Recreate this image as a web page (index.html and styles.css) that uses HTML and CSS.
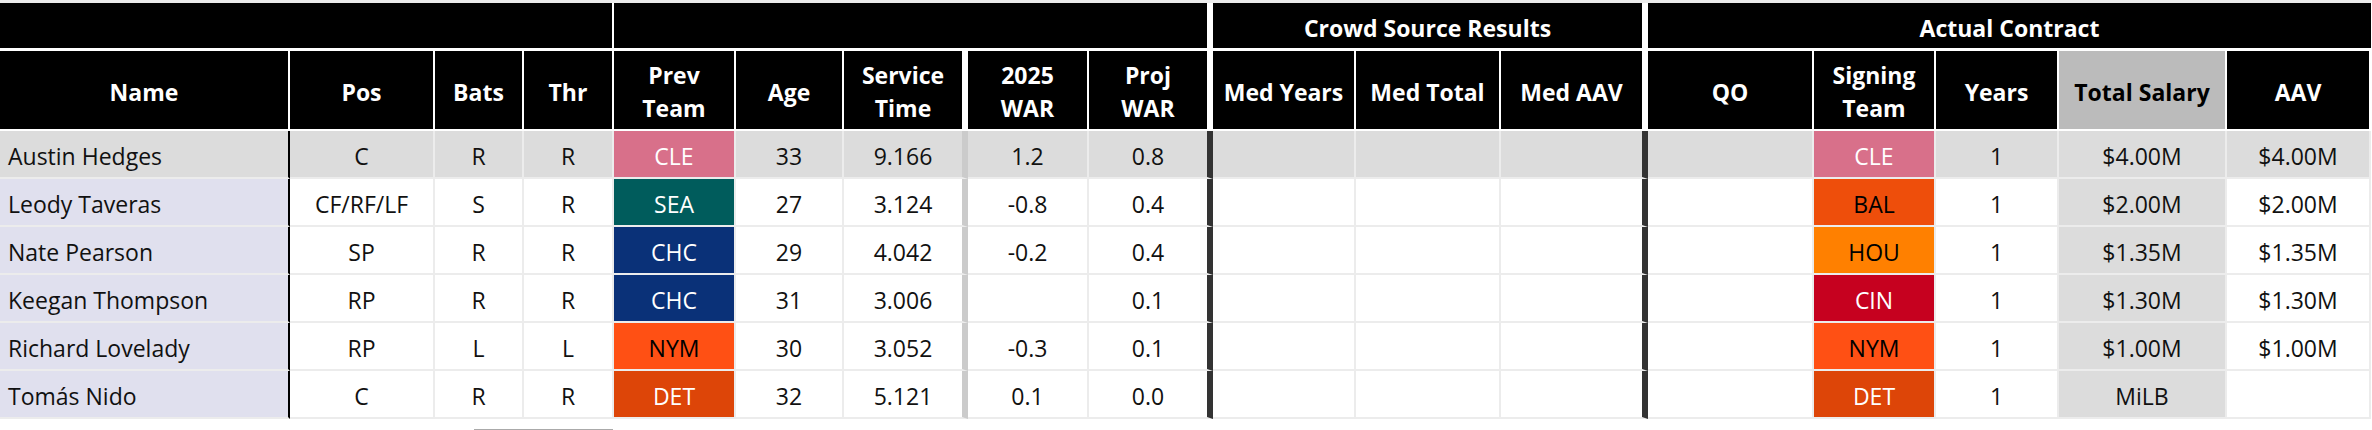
FILE: index.html
```html
<!DOCTYPE html>
<html lang="en">
<head>
<meta charset="utf-8">
<title>Free Agent Contracts</title>
<link rel="stylesheet" href="styles.css">
</head>
<body>
<div class="sheet">
  <div class="groups">
    <div class="grp grp-a"></div>
    <div class="grp grp-b"></div>
    <div class="grp grp-c">Crowd Source Results</div>
    <div class="grp grp-d">Actual Contract</div>
  </div>
  <div class="head">
    <div>Name</div>
    <div>Pos</div>
    <div>Bats</div>
    <div>Thr</div>
    <div>Prev<br>Team</div>
    <div>Age</div>
    <div>Service<br>Time</div>
    <div>2025<br>WAR</div>
    <div>Proj<br>WAR</div>
    <div>Med Years</div>
    <div>Med Total</div>
    <div>Med AAV</div>
    <div>QO</div>
    <div>Signing<br>Team</div>
    <div>Years</div>
    <div>Total Salary</div>
    <div>AAV</div>
  </div>

  <div class="row hl">
    <div>Austin Hedges</div><div>C</div><div>R</div><div>R</div>
    <div class="t-cle">CLE</div><div>33</div><div>9.166</div><div>1.2</div><div>0.8</div>
    <div></div><div></div><div></div>
    <div></div><div class="t-cle">CLE</div><div>1</div><div>$4.00M</div><div>$4.00M</div>
  </div>
  <div class="row">
    <div>Leody Taveras</div><div>CF/RF/LF</div><div>S</div><div>R</div>
    <div class="t-sea">SEA</div><div>27</div><div>3.124</div><div>-0.8</div><div>0.4</div>
    <div></div><div></div><div></div>
    <div></div><div class="t-bal">BAL</div><div>1</div><div>$2.00M</div><div>$2.00M</div>
  </div>
  <div class="row">
    <div>Nate Pearson</div><div>SP</div><div>R</div><div>R</div>
    <div class="t-chc">CHC</div><div>29</div><div>4.042</div><div>-0.2</div><div>0.4</div>
    <div></div><div></div><div></div>
    <div></div><div class="t-hou">HOU</div><div>1</div><div>$1.35M</div><div>$1.35M</div>
  </div>
  <div class="row">
    <div>Keegan Thompson</div><div>RP</div><div>R</div><div>R</div>
    <div class="t-chc">CHC</div><div>31</div><div>3.006</div><div></div><div>0.1</div>
    <div></div><div></div><div></div>
    <div></div><div class="t-cin">CIN</div><div>1</div><div>$1.30M</div><div>$1.30M</div>
  </div>
  <div class="row">
    <div>Richard Lovelady</div><div>RP</div><div>L</div><div>L</div>
    <div class="t-nym">NYM</div><div>30</div><div>3.052</div><div>-0.3</div><div>0.1</div>
    <div></div><div></div><div></div>
    <div></div><div class="t-nym">NYM</div><div>1</div><div>$1.00M</div><div>$1.00M</div>
  </div>
  <div class="row">
    <div>Tomás Nido</div><div>C</div><div>R</div><div>R</div>
    <div class="t-det">DET</div><div>32</div><div>5.121</div><div>0.1</div><div>0.0</div>
    <div></div><div></div><div></div>
    <div></div><div class="t-det">DET</div><div>1</div><div>MiLB</div><div></div>
  </div>
</div>
<div class="scroll-thumb"></div>
</body>
</html>
```

FILE: styles.css
```css
html, body {
  margin: 0;
  padding: 0;
  background: #fff;
}

body {
  width: 2372px;
  height: 430px;
  overflow: hidden;
  font-family: "Open Sans", "Noto Sans", sans-serif;
  font-size: 23px;
  color: #111;
}

.sheet {
  display: grid;
  grid-template-columns: 290px 145px 89px 90px 122px 108px 124px 121px 124px 143px 145px 147px 166px 122px 123px 168px 144px;
  width: 2371px;
  border-top: 3px solid #ececec;
}

.groups, .head, .row {
  display: contents;
}

.groups > *, .head > *, .row > * {
  box-sizing: border-box;
  display: flex;
  align-items: center;
  justify-content: center;
  text-align: center;
  padding-top: 4px;
  white-space: nowrap;
}

/* group header row */
.grp {
  height: 48px;
  background: #000;
  color: #fff;
  font-weight: 700;
  border-bottom: 3px solid #fff;
  border-right: 2px solid #fff;
}
.grp-a { grid-column: 1 / 5; }
.grp-b { grid-column: 5 / 10; border-right-width: 6px; }
.grp-c { grid-column: 10 / 13; border-right-width: 6px; }
.grp-d { grid-column: 13 / 18; border-right: 0; }

/* column header row */
.head > * {
  height: 80px;
  background: #000;
  color: #fff;
  font-weight: 700;
  line-height: 33px;
  border-right: 2px solid #fff;
  border-bottom: 2px solid #fff;
}
.head > :nth-child(7),
.head > :nth-child(9),
.head > :nth-child(12) {
  border-right-width: 6px;
}
.head > :nth-child(16) {
  background: #bbb;
  color: #000;
}

/* body rows */
.row > * {
  height: 48px;
  background: #fff;
  border-right: 2px solid #ececec;
  border-bottom: 2px solid #ececec;
}
.row > :first-child {
  justify-content: flex-start;
  padding-left: 8px;
  background: #e0e0ee;
  border-right-color: #000;
}
.row > :nth-child(7) {
  border-right: 6px solid #cbcbcb;
}
.row > :nth-child(9),
.row > :nth-child(12) {
  border-right: 6px solid #333;
}
.row > :nth-child(16) {
  background: #dcdcdc;
}
.row.hl > * {
  background: #dcdcdc;
}

/* team colours */
.row > .t-cle { background: #d8708a; color: #fff; }
.row > .t-sea { background: #005c5c; color: #fff; }
.row > .t-chc { background: #0a3178; color: #fff; }
.row > .t-nym { background: #ff5014; color: #000; }
.row > .t-det { background: #dd4508; color: #fff; }
.row > .t-bal { background: #ee4e0b; color: #000; }
.row > .t-hou { background: #ff8000; color: #000; }
.row > .t-cin { background: #c6011f; color: #fff; }

.scroll-thumb {
  margin: 10px 0 0 474px;
  width: 139px;
  height: 1px;
  background: #aaa;
}
```
